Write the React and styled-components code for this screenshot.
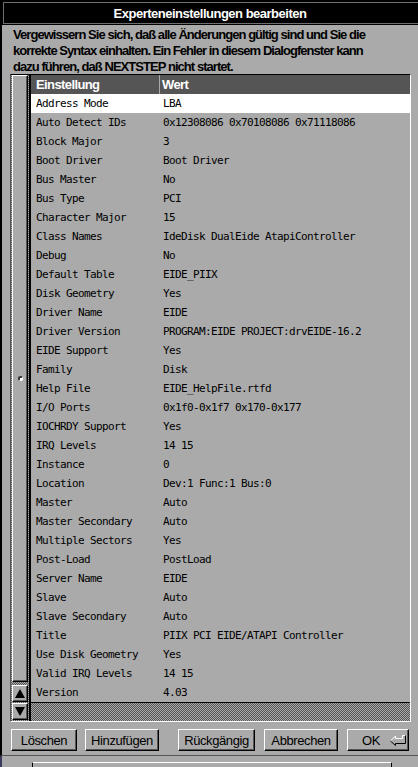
import React from 'react';
import styled, { createGlobalStyle } from 'styled-components';

const GlobalStyle = createGlobalStyle`
  html, body {
    margin: 0;
    padding: 0;
    background: #aaaaaa;
  }
  body {
    width: 418px;
    height: 767px;
    overflow: hidden;
  }
`;

const rows = [
  ['Address Mode', 'LBA'],
  ['Auto Detect IDs', '0x12308086 0x70108086 0x71118086'],
  ['Block Major', '3'],
  ['Boot Driver', 'Boot Driver'],
  ['Bus Master', 'No'],
  ['Bus Type', 'PCI'],
  ['Character Major', '15'],
  ['Class Names', 'IdeDisk DualEide AtapiController'],
  ['Debug', 'No'],
  ['Default Table', 'EIDE_PIIX'],
  ['Disk Geometry', 'Yes'],
  ['Driver Name', 'EIDE'],
  ['Driver Version', 'PROGRAM:EIDE PROJECT:drvEIDE-16.2'],
  ['EIDE Support', 'Yes'],
  ['Family', 'Disk'],
  ['Help File', 'EIDE_HelpFile.rtfd'],
  ['I/O Ports', '0x1f0-0x1f7 0x170-0x177'],
  ['IOCHRDY Support', 'Yes'],
  ['IRQ Levels', '14 15'],
  ['Instance', '0'],
  ['Location', 'Dev:1 Func:1 Bus:0'],
  ['Master', 'Auto'],
  ['Master Secondary', 'Auto'],
  ['Multiple Sectors', 'Yes'],
  ['Post-Load', 'PostLoad'],
  ['Server Name', 'EIDE'],
  ['Slave', 'Auto'],
  ['Slave Secondary', 'Auto'],
  ['Title', 'PIIX PCI EIDE/ATAPI Controller'],
  ['Use Disk Geometry', 'Yes'],
  ['Valid IRQ Levels', '14 15'],
  ['Version', '4.03'],
];

const hatch = `
  background-color: #aaaaaa;
  background-image: repeating-conic-gradient(#555555 0 25%, #aaaaaa 0 50%);
  background-size: 2px 2px;
`;

function App() {
  return (
    <>
      <GlobalStyle />
      <Screen>
        <Panel>
          <TitleBar>
            <TitleFrame>Experteneinstellungen bearbeiten</TitleFrame>
          </TitleBar>
          <Warning>
            Vergewissern Sie sich, daß alle Änderungen gültig sind und Sie die<br />
            korrekte Syntax einhalten. Ein Fehler in diesem Dialogfenster kann<br />
            dazu führen, daß NEXTSTEP nicht startet.
          </Warning>
          <TableFrame>
            <Scroller>
              <Knob>
                <Dimple />
              </Knob>
              <ArrowButton>
                <Triangle up />
              </ArrowButton>
              <ArrowButton>
                <Triangle />
              </ArrowButton>
            </Scroller>
            <Grid>
              <HeaderRow>
                <HeaderCell>Einstellung</HeaderCell>
                <HeaderCell divided>Wert</HeaderCell>
              </HeaderRow>
              {rows.map(([key, value], i) => (
                <Row key={key} selected={i === 0}>
                  <KeyCell>{key}</KeyCell>
                  <ValueCell>{value}</ValueCell>
                </Row>
              ))}
              <HScroll />
            </Grid>
          </TableFrame>
          <ButtonBar>
            <Button width={66}>Löschen</Button>
            <Button width={74} gap={8}>Hinzufügen</Button>
            <Button width={77} gap={19}>Rückgängig</Button>
            <Button width={74} gap={9}>Abbrechen</Button>
            <Button width={62} gap={9} wide>
              OK
              <ReturnIcon />
            </Button>
          </ButtonBar>
        </Panel>
        <Desk>
          <DeskCorner />
          <DeskLine />
        </Desk>
      </Screen>
    </>
  );
}

function ReturnIcon() {
  return (
    <svg width="16" height="11" viewBox="0 0 16 11">
      <path d="M0.5 6 L5.5 1 L5.5 3.5 L12.5 3.5 L12.5 0.5 L15.5 0.5" fill="none" stroke="#ffffff" strokeWidth="1" />
      <path d="M15.5 0.5 L15.5 8.5 L5.5 8.5 L5.5 10.5 L0.5 6" fill="none" stroke="#000000" strokeWidth="1" />
    </svg>
  );
}

const Screen = styled.div`
  display: flex;
  flex-direction: column;
  width: 418px;
  height: 767px;
  overflow: hidden;
  font-family: "Liberation Sans", Arial, sans-serif;
`;

const Panel = styled.div`
  display: flex;
  flex-direction: column;
  height: 756px;
  box-sizing: border-box;
  border-left: 2px solid #000000;
  border-bottom: 1px solid #555555;
  background: #aaaaaa;
`;

const TitleBar = styled.div`
  height: 25px;
  box-sizing: border-box;
  background: #000000;
  padding: 2px 0 1px 1px;
`;

const TitleFrame = styled.div`
  height: 100%;
  box-sizing: border-box;
  border: 1px solid #6e6e6e;
  border-right: none;
  display: flex;
  align-items: center;
  justify-content: center;
  padding-right: 2px;
  color: #ffffff;
  font-weight: bold;
  font-size: 13px;
  letter-spacing: -0.5px;
`;

const Warning = styled.div`
  height: 49px;
  box-sizing: border-box;
  padding: 2px 0 0 11px;
  font-weight: bold;
  font-size: 13px;
  line-height: 16px;
  letter-spacing: -0.95px;
  white-space: nowrap;
  color: #000000;
`;

const TableFrame = styled.div`
  display: flex;
  margin-left: 8px;
  width: 401px;
  height: 648px;
  box-sizing: border-box;
  border-top: 1px solid #000000;
  border-left: 1px solid #555555;
  border-right: 1px solid #ffffff;
  border-bottom: 1px solid #ffffff;
`;

const Scroller = styled.div`
  display: flex;
  flex-direction: column;
  width: 20px;
  flex-shrink: 0;
  box-sizing: border-box;
  border-right: 2px solid #000000;
  ${hatch}
`;

const bevel = `
  box-sizing: border-box;
  background: #aaaaaa;
  border-top: 1px solid #ffffff;
  border-left: 1px solid #ffffff;
  border-right: 1px solid #000000;
  border-bottom: 1px solid #000000;
  box-shadow: inset -1px -1px 0 #555555;
`;

const Knob = styled.div`
  ${bevel}
  height: 608px;
  margin: 0 0 3px 1px;
  width: 16px;
  display: flex;
  align-items: center;
  justify-content: center;
`;

const Dimple = styled.div`
  width: 5px;
  height: 5px;
  border-radius: 50%;
  box-sizing: border-box;
  border-top: 2px solid #333333;
  border-left: 2px solid #333333;
  border-right: 1px solid #ffffff;
  border-bottom: 1px solid #ffffff;
  background: #ffffff;
`;

const ArrowButton = styled.div`
  ${bevel}
  height: 17px;
  width: 16px;
  margin: 0 0 1px 1px;
  display: flex;
  align-items: center;
  justify-content: center;
`;

const Triangle = styled.div`
  width: 0;
  height: 0;
  border-left: 5px solid transparent;
  border-right: 5px solid transparent;
  ${p => (p.up ? 'border-bottom: 9px solid #000000;' : 'border-top: 9px solid #000000;')}
`;

const Grid = styled.div`
  flex: 1;
  display: flex;
  flex-direction: column;
  min-width: 0;
`;

const HeaderRow = styled.div`
  display: flex;
  height: 19px;
  background: #555555;
`;

const HeaderCell = styled.div`
  display: flex;
  align-items: center;
  box-sizing: border-box;
  color: #ffffff;
  font-weight: bold;
  font-size: 13px;
  letter-spacing: -0.6px;
  ${p => (p.divided
    ? 'flex: 1; padding-left: 2px; border-left: 1px solid #aaaaaa;'
    : 'width: 128px; padding-left: 5px;')}
`;

const Row = styled.div`
  display: flex;
  align-items: center;
  height: 19px;
  background: ${p => (p.selected ? '#ffffff' : '#aaaaaa')};
  font-family: "DejaVu Sans Mono", "Liberation Mono", monospace;
  font-size: 11px;
  letter-spacing: -0.62px;
  color: #000000;
  white-space: nowrap;
`;

const KeyCell = styled.div`
  width: 132px;
  box-sizing: border-box;
  padding-left: 5px;
`;

const ValueCell = styled.div`
  flex: 1;
`;

const HScroll = styled.div`
  flex: 1;
  border-top: 1px solid #000000;
  ${hatch}
`;

const ButtonBar = styled.div`
  display: flex;
  padding: 7px 0 0 9px;
`;

const Button = styled.div`
  ${bevel}
  width: ${p => p.width}px;
  height: 22px;
  margin-left: ${p => p.gap || 0}px;
  display: flex;
  align-items: center;
  justify-content: ${p => (p.wide ? 'space-between' : 'center')};
  padding: ${p => (p.wide ? '0 2px 0 14px' : '0')};
  font-size: 13px;
  letter-spacing: -0.4px;
  color: #000000;
`;

const Desk = styled.div`
  flex: 1;
  display: flex;
  flex-direction: column;
  background: #aaaaaa;
  position: relative;
`;

const DeskCorner = styled.div`
  position: absolute;
  left: 0;
  bottom: 0;
  width: 2px;
  height: 11px;
  background: #3a3a5a;
`;

const DeskLine = styled.div`
  margin-top: 6px;
  margin-left: 32px;
  width: 358px;
  height: 4px;
  border-top: 1px solid #ffffff;
  border-left: 1px solid #000000;
  border-right: 1px solid #000000;
`;

export default App;
